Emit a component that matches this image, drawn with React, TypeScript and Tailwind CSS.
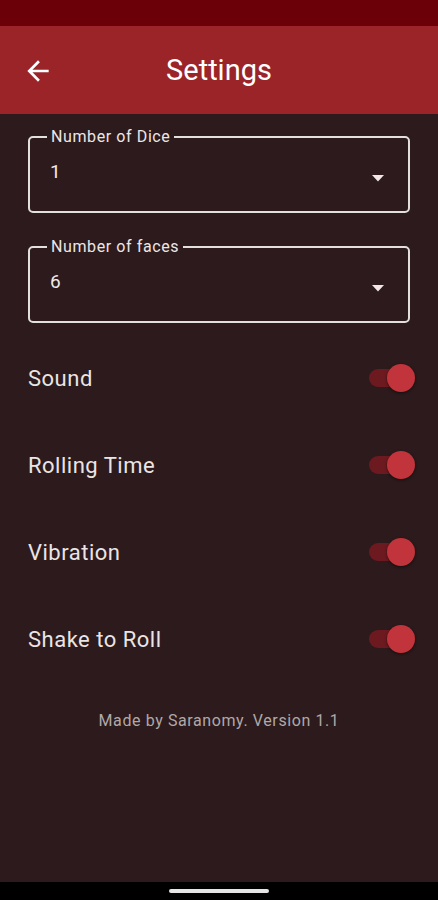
import React from "react";

function Dropdown({ label, value }: { label: string; value: string }) {
  return (
    <div className="relative h-[77px] rounded-[5px] border-2 border-[#e4dfdf]">
      <span className="absolute left-[17px] top-[-11px] bg-[#2c1a1c] px-[4px] text-[16px] leading-[20px] tracking-[0.6px] text-[#ece6e6]">
        {label}
      </span>
      <div className="flex h-full items-start justify-between pl-[20px] pr-[24px]">
        <span className="pt-[22px] text-[19px] leading-[24px] text-[#f0eaea]">{value}</span>
        <svg width="12" height="7" viewBox="0 0 12 7" className="mt-[37px]">
          <path d="M0 0 L12 0 L6 6.5 Z" fill="#f3e6e6" />
        </svg>
      </div>
    </div>
  );
}

function ToggleRow({ label }: { label: string }) {
  return (
    <div className="flex h-[40px] items-center justify-between">
      <span className="text-[22px] tracking-[0.5px] text-[#ebe4e4]">{label}</span>
      <div className="relative mr-[-1px] h-[18px] w-[42px] rounded-full bg-[#6c1a20]">
        <div className="absolute right-[-4px] top-[-5px] h-[28px] w-[28px] rounded-full bg-[#c2343b] shadow-[0_1px_3px_rgba(0,0,0,0.5)]" />
      </div>
    </div>
  );
}

export default function App() {
  return (
    <div
      className="flex h-[900px] w-full flex-col bg-[#2c1a1c]"
      style={{ fontFamily: "Roboto, 'Noto Sans', sans-serif" }}
    >
      <div className="h-[26px] bg-[#6b0009]" />
      <div className="grid h-[88px] grid-cols-[1fr_auto_1fr] items-center bg-[#9a2428]">
        <div className="pl-[22px] pt-[2px]">
          <svg width="32" height="32" viewBox="0 0 24 24" className="block">
            <path
              d="M20 11H7.83l5.59-5.59L12 4l-8 8 8 8 1.41-1.41L7.83 13H20v-2z"
              fill="#ffffff"
            />
          </svg>
        </div>
        <div className="pt-[2px] text-[29px] text-white">Settings</div>
        <div />
      </div>
      <div className="flex flex-1 flex-col px-[28px] pt-[22px]">
        <Dropdown label="Number of Dice" value="1" />
        <div className="h-[33px]" />
        <Dropdown label="Number of faces" value="6" />
        <div className="mt-[35px] flex flex-col gap-[47px]">
          <ToggleRow label="Sound" />
          <ToggleRow label="Rolling Time" />
          <ToggleRow label="Vibration" />
          <ToggleRow label="Shake to Roll" />
        </div>
        <div className="mt-[52px] text-center text-[16px] leading-[20px] tracking-[0.6px] text-[#b1a8a8]">
          Made by Saranomy. Version 1.1
        </div>
      </div>
      <div className="flex h-[18px] items-center justify-center bg-black">
        <div className="h-[4px] w-[100px] rounded-full bg-[#e6e6e6]" />
      </div>
    </div>
  );
}
